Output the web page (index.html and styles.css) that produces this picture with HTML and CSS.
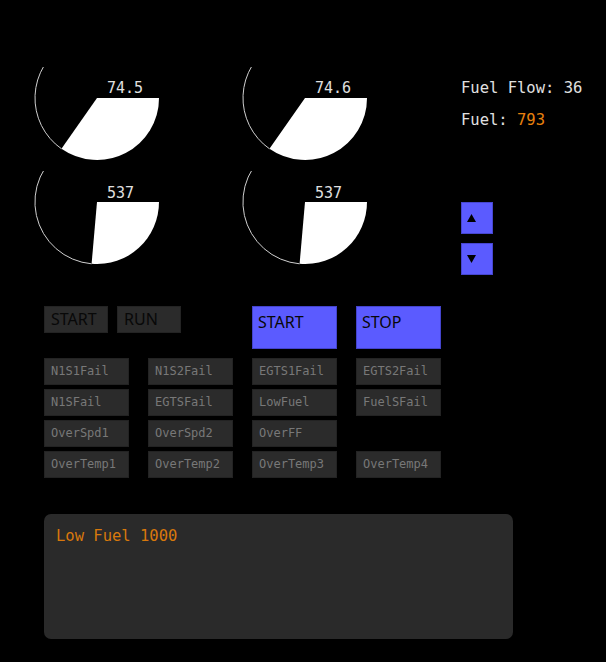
FILE: index.html
```html
<!DOCTYPE html>
<html>
<head>
<meta charset="utf-8">
<link rel="stylesheet" href="styles.css">
</head>
<body>
<div class="top">
  <div class="gauges">
    <svg class="gauge" width="208" height="104" viewBox="0 0 208 104">
      <path class="ring" d="M31.44,81.79 A62,62 0 0 1 36,-22.7"/>
      <path class="pie" d="M67,31 L129,31 A62,62 0 0 1 31.44,81.79 Z"/>
      <text x="77" y="26">74.5</text>
    </svg>
    <svg class="gauge" width="208" height="104" viewBox="0 0 208 104">
      <path class="ring" d="M31.44,81.79 A62,62 0 0 1 36,-22.7"/>
      <path class="pie" d="M67,31 L129,31 A62,62 0 0 1 31.44,81.79 Z"/>
      <text x="77" y="26">74.6</text>
    </svg>
    <svg class="gauge" width="208" height="104" viewBox="0 0 208 104">
      <path class="ring" d="M61.6,92.8 A62,62 0 0 1 36,-22.7"/>
      <path class="pie" d="M67,31 L129,31 A62,62 0 0 1 61.6,92.8 Z"/>
      <text x="77" y="27">537</text>
    </svg>
    <svg class="gauge" width="208" height="104" viewBox="0 0 208 104">
      <path class="ring" d="M61.6,92.8 A62,62 0 0 1 36,-22.7"/>
      <path class="pie" d="M67,31 L129,31 A62,62 0 0 1 61.6,92.8 Z"/>
      <text x="77" y="27">537</text>
    </svg>
  </div>
  <div class="side">
    <div class="readout">Fuel Flow: 36</div>
    <div class="readout">Fuel: <span class="orange">793</span></div>
    <div class="arrows">
      <div class="arrow"><svg width="9" height="8" viewBox="0 0 9 8"><path d="M4.5,0 L9,8 L0,8 Z"/></svg></div>
      <div class="arrow"><svg width="9" height="8" viewBox="0 0 9 8"><path d="M0,0 L9,0 L4.5,8 Z"/></svg></div>
    </div>
  </div>
</div>

<div class="controls">
  <div class="row-top">
    <div class="pair">
      <div class="btn dark">START</div>
      <div class="btn dark">RUN</div>
    </div>
    <div class="btn blue">START</div>
    <div class="btn blue">STOP</div>
  </div>
  <div class="fails">
    <div class="fail">N1S1Fail</div>
    <div class="fail">N1S2Fail</div>
    <div class="fail">EGTS1Fail</div>
    <div class="fail">EGTS2Fail</div>
    <div class="fail">N1SFail</div>
    <div class="fail">EGTSFail</div>
    <div class="fail">LowFuel</div>
    <div class="fail">FuelSFail</div>
    <div class="fail">OverSpd1</div>
    <div class="fail">OverSpd2</div>
    <div class="fail">OverFF</div>
    <div class="empty"></div>
    <div class="fail">OverTemp1</div>
    <div class="fail">OverTemp2</div>
    <div class="fail">OverTemp3</div>
    <div class="fail">OverTemp4</div>
  </div>
</div>

<div class="message">Low Fuel 1000</div>
</body>
</html>
```
FILE: styles.css
```css
html, body {
  margin: 0;
  padding: 0;
  background: #000;
}
body {
  width: 606px;
  height: 662px;
  overflow: hidden;
  font-family: "DejaVu Sans Mono", monospace;
  color: #e6e6e6;
}
.top {
  display: flex;
  padding-top: 67px;
}
.gauges {
  margin-left: 30px;
  display: grid;
  grid-template-columns: 208px 208px;
  grid-template-rows: 104px 104px;
}
.gauge {
  display: block;
  overflow: hidden;
}
.gauge .ring {
  fill: none;
  stroke: #d0d0d0;
  stroke-width: 1;
}
.gauge .pie {
  fill: #fff;
}
.gauge text {
  fill: #e0e0e0;
  font-family: "DejaVu Sans Mono", monospace;
  font-size: 15px;
}
.side {
  margin-left: 15px;
  margin-top: 12px;
  display: flex;
  flex-direction: column;
}
.readout {
  font-size: 15.5px;
  line-height: 18px;
  height: 18px;
  margin-bottom: 14px;
  color: #e0e0e0;
  white-space: pre;
}
.orange {
  color: #e8800e;
}
.arrows {
  margin-top: 59px;
  display: flex;
  flex-direction: column;
  gap: 9px;
}
.arrow {
  width: 32px;
  height: 32px;
  box-sizing: border-box;
  background: #5b5bff;
  border: 1px solid #4646d0;
  display: flex;
  align-items: center;
  padding-left: 5px;
}
.arrow svg {
  display: block;
  fill: #000;
}
.controls {
  margin-top: 31px;
  margin-left: 44px;
}
.row-top {
  display: grid;
  grid-template-columns: 189px 85px 85px;
  column-gap: 19px;
  align-items: start;
}
.pair {
  display: flex;
  gap: 9px;
}
.btn {
  box-sizing: border-box;
  font-family: "Noto Sans", sans-serif;
  font-size: 16px;
  color: #080808;
}
.btn.dark {
  width: 64px;
  height: 27px;
  background: #2b2b2b;
  border: 1px solid #232323;
  padding-left: 6px;
  line-height: 24px;
}
.btn.blue {
  width: 85px;
  height: 43px;
  background: #5b5bff;
  border: 1px solid #4444cc;
  padding-left: 5px;
  padding-top: 5px;
  line-height: 21px;
}
.fails {
  margin-top: 9px;
  display: grid;
  grid-template-columns: repeat(4, 85px);
  grid-auto-rows: 27px;
  column-gap: 19px;
  row-gap: 4px;
}
.fail {
  box-sizing: border-box;
  background: #2b2b2b;
  border: 1px solid #232323;
  color: #787878;
  font-size: 12px;
  line-height: 25px;
  padding-left: 6px;
  white-space: nowrap;
}
.message {
  margin: 36px 0 0 44px;
  width: 469px;
  height: 125px;
  box-sizing: border-box;
  background: #2a2a2a;
  border-radius: 7px;
  color: #d8780c;
  font-size: 15.5px;
  line-height: 18px;
  padding: 13px 0 0 12px;
}
```
